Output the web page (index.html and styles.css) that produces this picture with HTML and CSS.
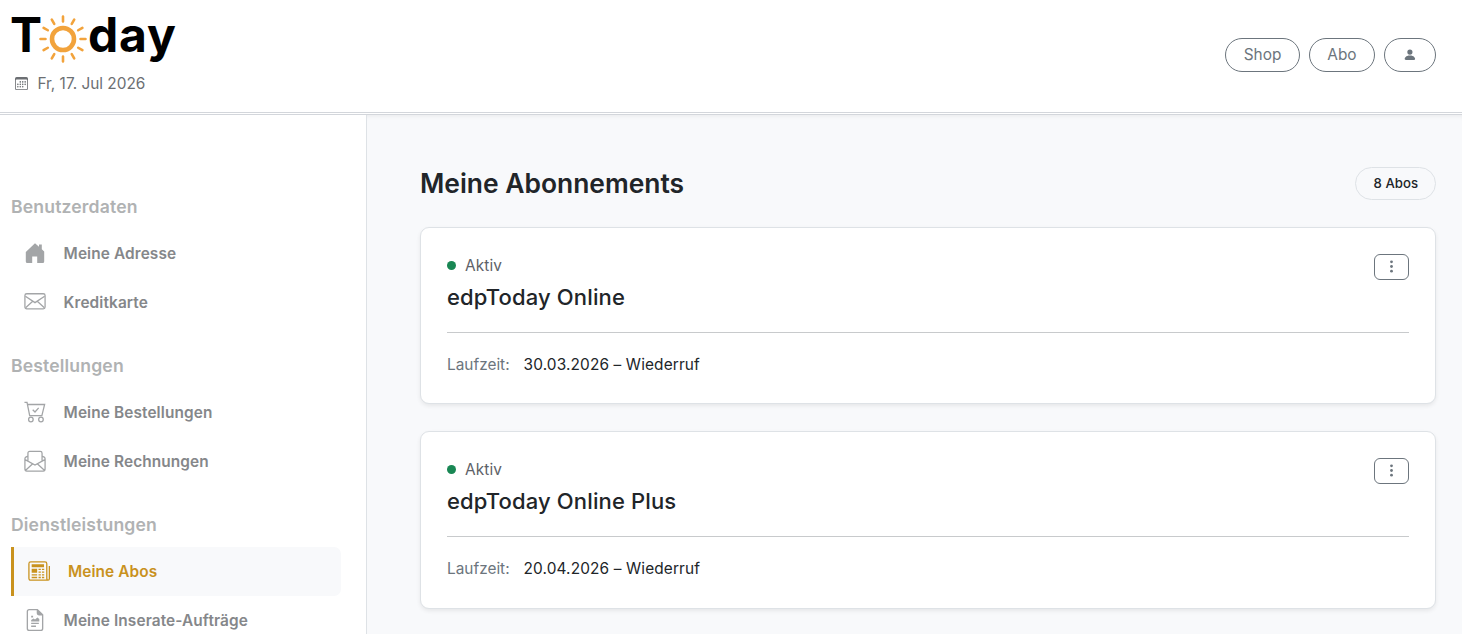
FILE: index.html
```html
<!DOCTYPE html>
<html lang="de">
    <head>
        <meta charset="utf-8">
        <title>Meine Abonnements</title>
        <link rel="stylesheet" href="styles.css">
    </head>
    <body>
        <header class="header">
            <div class="brand">
                <div class="logo">
                    <span>T</span>
                    <svg class="sun" viewBox="-24 -24 48 48">
                        <circle r="11"/>
                        <path d="M0-17.500V-22.500M0 17.500V22.500M-17.500 0H-22.500M17.500 0H22.500M8.750-15.200L11.200-19.400M15.200-8.750L19.400-11.200M15.200 8.750L19.400 11.200M8.750 15.200L11.200 19.400M-8.750 15.200L-11.200 19.400M-15.200 8.750L-19.400 11.200M-15.200-8.750L-19.400-11.200M-8.750-15.200L-11.200-19.400"/>
                    </svg>
                    <span>day</span>
                </div>
                <div class="date">
                    <svg class="date-icon" viewBox="0 0 16 16" fill="currentColor">
                        <path d="M14 0H2a2 2 0 0 0-2 2v12a2 2 0 0 0 2 2h12a2 2 0 0 0 2-2V2a2 2 0 0 0-2-2zM1 3.857C1 3.384 1.448 3 2 3h12c.552 0 1 .384 1 .857v10.286c0 .473-.448.857-1 .857H2c-.552 0-1-.384-1-.857V3.857z"/>
                        <path d="M6.5 7a1 1 0 1 0 0-2 1 1 0 0 0 0 2zm3 0a1 1 0 1 0 0-2 1 1 0 0 0 0 2zm3 0a1 1 0 1 0 0-2 1 1 0 0 0 0 2zm-9 3a1 1 0 1 0 0-2 1 1 0 0 0 0 2zm3 0a1 1 0 1 0 0-2 1 1 0 0 0 0 2zm3 0a1 1 0 1 0 0-2 1 1 0 0 0 0 2zm3 0a1 1 0 1 0 0-2 1 1 0 0 0 0 2zm-9 3a1 1 0 1 0 0-2 1 1 0 0 0 0 2zm3 0a1 1 0 1 0 0-2 1 1 0 0 0 0 2zm3 0a1 1 0 1 0 0-2 1 1 0 0 0 0 2z"/>
                    </svg>
                    <span>Fr, 17. Jul 2026</span>
                </div>
            </div>
            <nav class="header-nav">
                <a class="pill">Shop</a>
                <a class="pill">Abo</a>
                <a class="pill pill-user">
                    <svg viewBox="0 0 16 16" fill="currentColor"><path d="M3 14s-1 0-1-1 1-4 6-4 6 3 6 4-1 1-1 1H3zm5-6a3 3 0 1 0 0-6 3 3 0 0 0 0 6z"/></svg>
                </a>
            </nav>
        </header>

        <div class="page">
            <aside class="sidebar">
                <h2>Benutzerdaten</h2>
                <a class="item">
                    <svg class="icon" viewBox="1 1 22 22" fill="currentColor"><path d="M12 2.200L2.800 11V20.500Q2.800 22 4.300 22H9.200V15.500H14.200V22H19.700Q21.200 22 21.200 20.500V10.500L18.800 8.200V3.500H16V5.700Z"/></svg>
                    <span>Meine Adresse</span>
                </a>
                <a class="item">
                    <svg class="icon line" viewBox="0 0 24 24"><rect x="1" y="3" width="22" height="16.400" rx="2"/><path d="M1.500 5.700L12 12.700 22.500 5.700M1.800 18.200L9.500 11.200M22.200 18.200L14.500 11.200"/></svg>
                    <span>Kreditkarte</span>
                </a>
                <h2>Bestellungen</h2>
                <a class="item">
                    <svg class="icon line" viewBox="0 0 24 24"><path d="M.500 1.500H3.300L6.200 16H19.500L22.500 3.800H3.800M9.500 9.500L12 12 16 7.500"/><circle cx="7.500" cy="20.200" r="2.500"/><circle cx="18.500" cy="20.200" r="2.500"/></svg>
                    <span>Meine Bestellungen</span>
                </a>
                <a class="item">
                    <svg class="icon line" viewBox="0 0 24 24"><path d="M4.300 13V3.500Q4.300 1.500 6.300 1.500H17.700Q19.700 1.500 19.700 3.500V13M4.300 6.500L2 7.800Q1 8.500 1 9.500V20.500Q1 23 3 23H21Q23 23 23 20.500V9.500Q23 8.500 22 7.800L19.700 6.500M1.200 10.500L12 16.500 22.800 10.500M1.800 22L9.500 15M22.200 22L14.500 15"/></svg>
                    <span>Meine Rechnungen</span>
                </a>
                <h2>Dienstleistungen</h2>
                <a class="item active">
                    <svg class="icon line" viewBox="0 0 24 24"><path d="M20.500 5V19.500Q20.500 22 22 22Q23.300 22 23.300 20.500V6.500M22 22H3Q1 22 1 20V4Q1 2 3 2H18.500Q20.500 2 20.500 4V20.500"/><path class="solid" d="M4 4.500H17.500V8H4ZM4 9.500H10V14H4ZM4 15.500H10V17H4ZM4 18.300H10V19.800H4ZM11.500 9.500H14V11H11.500ZM15.200 9.500H17.700V11H15.200ZM11.500 12.500H14V14H11.500ZM15.200 12.500H17.700V14H15.200ZM11.500 15.500H14V17H11.500ZM15.200 15.500H17.700V17H15.200ZM11.500 18.300H14V19.800H11.500ZM15.200 18.300H17.700V19.800H15.200Z"/></svg>
                    <span>Meine Abos</span>
                </a>
                <a class="item">
                    <svg class="icon line" viewBox="0.5 0.5 23 23"><path d="M14.500 1.200H6Q4 1.200 4 3.200V20.800Q4 22.800 6 22.800H18Q20 22.800 20 20.800V6.500ZM14.500 1.200V4.500Q14.500 6.500 16.500 6.500H20M8 15.500H16M8 18.500H13"/><path class="solid" d="M8 13.500V12L10.500 10.500 12 11.500 14.500 9.500 16.500 11V13.500ZM8 7.500H10V9.500H8ZM15 1.500V6H19.500Z"/></svg>
                    <span>Meine Inserate-Aufträge</span>
                </a>
            </aside>

            <main class="content">
                <div class="title-row">
                    <h1>Meine Abonnements</h1>
                    <span class="count">8 Abos</span>
                </div>

                <section class="card">
                    <div class="card-head">
                        <div>
                            <div class="status">Aktiv</div>
                            <h3>edpToday Online</h3>
                        </div>
                        <button class="menu"><svg viewBox="0 0 16 16" fill="currentColor"><circle cx="8" cy="3" r="1.500"/><circle cx="8" cy="8" r="1.500"/><circle cx="8" cy="13" r="1.500"/></svg></button>
                    </div>
                    <div class="term"><span class="label">Laufzeit:</span><span class="value">30.03.2026 – Wiederruf</span></div>
                </section>

                <section class="card">
                    <div class="card-head">
                        <div>
                            <div class="status">Aktiv</div>
                            <h3>edpToday Online Plus</h3>
                        </div>
                        <button class="menu"><svg viewBox="0 0 16 16" fill="currentColor"><circle cx="8" cy="3" r="1.500"/><circle cx="8" cy="8" r="1.500"/><circle cx="8" cy="13" r="1.500"/></svg></button>
                    </div>
                    <div class="term"><span class="label">Laufzeit:</span><span class="value">20.04.2026 – Wiederruf</span></div>
                </section>
            </main>
        </div>
    </body>
</html>
```

FILE: styles.css
```css
* { box-sizing: border-box; }

html, body {
    margin: 0;
    padding: 0;
    height: 100%;
}

body {
    display: flex;
    flex-direction: column;
    overflow: hidden;
    background: #fff;
    color: #212529;
    font-family: Inter, "Liberation Sans", sans-serif;
    font-size: 15.4px;
}

h1, h2, h3 { margin: 0; }

.header {
    display: flex;
    flex: none;
    justify-content: space-between;
    height: 115px;
    padding: 13px 26px 0 10px;
    border-bottom: 3px double #d3d6db;
}

.logo {
    display: flex;
    height: 50px;
    color: #000;
    font-size: 48px;
    font-weight: 700;
    letter-spacing: 0.9px;
    line-height: 43px;
}
.sun {
    width: 48px;
    height: 48px;
    margin: 2px 1px 0 -4px;
    fill: none;
    stroke: #f2a33c;
    stroke-width: 2.6;
    stroke-linecap: round;
}
.sun circle { stroke-width: 4.6; }

.date {
    display: flex;
    align-items: center;
    gap: 9.4px;
    height: 40px;
    padding-left: 5px;
    color: #6c6f73;
}
.date-icon {
    width: 13px;
    height: 13px;
}

.header-nav {
    display: flex;
    gap: 8.8px;
    padding-top: 25px;
}
.pill {
    height: 34px;
    padding: 0 17.6px;
    border: 1px solid #6c757d;
    border-radius: 17px;
    color: #6c757d;
    line-height: 32px;
}
.pill-user {
    display: flex;
    align-items: center;
    justify-content: center;
    width: 52px;
}
.pill-user svg {
    width: 15.4px;
    height: 15.4px;
    margin: 0 1px 1px 0;
}

.page {
    display: flex;
    flex: 1;
    min-height: 0;
}

.sidebar {
    flex: none;
    width: 367px;
    padding: 73px 25px 0 11px;
    border-right: 1px solid #dee2e6;
}
.sidebar h2 {
    height: 41px;
    color: #b0b2b3;
    font-size: 17.6px;
    font-weight: 600;
    letter-spacing: 0.15px;
    line-height: 38px;
}
.item + h2 { margin-top: 20px; }
.item {
    display: flex;
    align-items: center;
    gap: 17.6px;
    height: 49px;
    padding-left: 13px;
    border-radius: 7px;
    color: #85878a;
    font-weight: 600;
    letter-spacing: 0.11px;
}
.item.active {
    padding-left: 14.3px;
    border-left: 3px solid #c9921e;
    border-radius: 0 7px 7px 0;
    background: #f8f9fb;
    color: #c9921e;
}
.icon {
    width: 22px;
    height: 22px;
    margin-bottom: 1px;
    color: #a3a5a7;
}
.active .icon { color: #c9921e; }
.line {
    fill: none;
    stroke: currentColor;
    stroke-width: 1.4;
}
.solid {
    fill: currentColor;
    stroke: none;
}

.content {
    flex: 1;
    padding: 52px 26px 0 53px;
    background: #f8f9fb;
    box-shadow: inset 0 5px 5px -4px #0001;
}
.title-row {
    display: flex;
    align-items: center;
    justify-content: space-between;
    height: 33px;
    margin-bottom: 27px;
}
h1 {
    padding-bottom: 2px;
    font-size: 26.4px;
    font-weight: 600;
}
.count {
    height: 33px;
    padding: 0 17px 0 17.5px;
    border: 1px solid #dee2e6;
    border-radius: 17px;
    font-size: 13.2px;
    font-weight: 500;
    line-height: 31px;
}

.card {
    height: 177.4px;
    margin-bottom: 27px;
    padding: 26px;
    border: 1px solid #dee2e6;
    border-radius: 9px;
    background: #fff;
    box-shadow: 0 2px 4px #00000013;
}
.card-head {
    display: flex;
    align-items: flex-start;
    justify-content: space-between;
    height: 79px;
    border-bottom: 1px solid #c8cacc;
}
.status {
    display: flex;
    align-items: center;
    gap: 9px;
    height: 22px;
    color: #5d6167;
    letter-spacing: 0.1px;
}
.status::before {
    content: "";
    width: 9px;
    height: 9px;
    border-radius: 50%;
    background: #198754;
}
h3 {
    font-size: 22px;
    font-weight: 500;
    letter-spacing: 0.14px;
    line-height: 43px;
}
.menu {
    display: flex;
    align-items: center;
    justify-content: center;
    width: 35px;
    height: 26px;
    padding: 0 0 1px;
    border: 1px solid #6c757d;
    border-radius: 6px;
    background: #fff;
    color: #6c757d;
}
.menu svg {
    width: 15px;
    height: 15px;
}
.term {
    display: flex;
    gap: 14px;
    padding-top: 22px;
    line-height: 20px;
}
.label { color: #6c757d; }
.value { letter-spacing: 0.13px; }
```
